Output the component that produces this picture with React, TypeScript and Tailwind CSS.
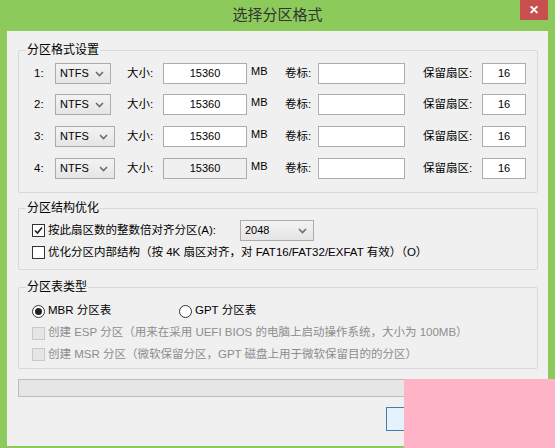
import React from 'react';

const Chevron = () => (
    <svg width="9" height="6" viewBox="0 0 9 6" className="shrink-0">
        <path d="M1 1 L4.5 4.5 L8 1" fill="none" stroke="#6d6d6d" strokeWidth="1.6" />
    </svg>
);

function Select({ value, w }: { value: string; w: string }) {
    return (
        <div className={`${w} h-[21px] flex items-center justify-between pl-[4px] pr-[6px] border border-[#acacac] bg-gradient-to-b from-[#f3f3f3] to-[#e5e5e5] text-[11px] text-black`}>
            <span>{value}</span>
            <Chevron />
        </div>
    );
}

function Field({ w, value, disabled }: { w: string; value?: string; disabled?: boolean }) {
    return (
        <div className={`${w} h-[21px] flex items-center justify-center border border-[#abadb3] text-[11px] text-black ${disabled ? 'bg-[#f0f0f0]' : 'bg-white'}`}>
            {value}
        </div>
    );
}

function Check({ checked, disabled }: { checked?: boolean; disabled?: boolean }) {
    return (
        <div className={`w-[13px] h-[13px] shrink-0 flex items-center justify-center border ${disabled ? 'border-[#c9c9c9] bg-[#e6e6e6]' : 'border-[#333] bg-white'}`}>
            {checked && (
                <svg width="9" height="9" viewBox="0 0 9 9">
                    <path d="M1 4.5 L3.5 7 L8 1.5" fill="none" stroke="#222" strokeWidth="1.7" />
                </svg>
            )}
        </div>
    );
}

function Radio({ checked }: { checked?: boolean }) {
    return (
        <div className="w-[13px] h-[13px] shrink-0 rounded-full border border-[#333] bg-white flex items-center justify-center">
            {checked && <div className="w-[7px] h-[7px] rounded-full bg-[#222]" />}
        </div>
    );
}

function Group({ title, className, children }: { title: string; className?: string; children: React.ReactNode }) {
    return (
        <div className={`relative border border-[#d9d9d9] rounded-[2px] ${className ?? ''}`}>
            <span className="absolute left-[7px] -top-[9px] px-[1px] bg-[#f0f0f0] text-[12px] leading-[16px] text-black">{title}</span>
            {children}
        </div>
    );
}

const rows = [
    { n: '1:', sw: 'w-[56px]', mt: '', disabled: false },
    { n: '2:', sw: 'w-[56px]', mt: 'mt-[10px]', disabled: false },
    { n: '3:', sw: 'w-[60px]', mt: 'mt-[11px]', disabled: false },
    { n: '4:', sw: 'w-[60px]', mt: 'mt-[11px]', disabled: true },
];

export default function App() {
    return (
        <div className="relative w-[555px] h-[448px] bg-[#8cca5c] overflow-hidden font-['Liberation_Sans','Noto_Sans_CJK_SC',sans-serif] text-black">
            <div className="h-[31px] flex items-center justify-center text-[15px] text-[#333]">选择分区格式</div>
            <div className="absolute right-[7px] top-0 w-[28px] h-[20px] bg-[#c7504f] flex items-center justify-center text-white text-[12px] font-bold">✕</div>

            <div className="mx-[7px] h-[415px] bg-[#f0f0f0] pl-[11px] pr-[10px] pt-[19px]">
                <Group title="分区格式设置" className="pt-[12px] pb-[13px]">
                    {rows.map(r => (
                        <div key={r.n} className={`flex items-center h-[21px] pl-[15px] text-[11.5px] ${r.mt}`}>
                            <span className="w-[21px]">{r.n}</span>
                            <div className="w-[72px]"><Select value="NTFS" w={r.sw} /></div>
                            <span className="w-[36px]">大小:</span>
                            <Field w="w-[84px]" value="15360" disabled={r.disabled} />
                            <span className="w-[38px] pl-[4px] text-[11px] -mt-[4px]">MB</span>
                            <span className="w-[33px]">卷标:</span>
                            <Field w="w-[87px]" />
                            <span className="w-[77px] pl-[18px]">保留扇区:</span>
                            <Field w="w-[44px]" value="16" />
                        </div>
                    ))}
                </Group>

                <Group title="分区结构优化" className="mt-[15px] pt-[11px] pb-[6px]">
                    <div className="flex items-center h-[21px] pl-[13px] text-[11.5px]">
                        <div className="w-[208px] flex items-center gap-[3px]">
                            <Check checked />
                            <span>按此扇区数的整数倍对齐分区(A):</span>
                        </div>
                        <Select value="2048" w="w-[74px]" />
                    </div>
                    <div className="flex items-center h-[21px] mt-[1px] pl-[13px] gap-[3px] text-[11.5px]">
                        <Check />
                        <span>优化分区内部结构（按 4K 扇区对齐，对 FAT16/FAT32/EXFAT 有效）（O）</span>
                    </div>
                </Group>

                <Group title="分区表类型" className="mt-[17px] pt-[12px] pb-[3px]">
                    <div className="flex items-center h-[22px] pl-[13px] text-[11.5px]">
                        <div className="w-[147px] flex items-center gap-[3px]">
                            <Radio checked />
                            <span>MBR 分区表</span>
                        </div>
                        <div className="flex items-center gap-[3px]">
                            <Radio />
                            <span>GPT 分区表</span>
                        </div>
                    </div>
                    <div className="flex items-center h-[22px] pl-[13px] gap-[3px] text-[11.5px] text-[#8d8d8d]">
                        <Check disabled />
                        <span>创建 ESP 分区（用来在采用 UEFI BIOS 的电脑上启动操作系统，大小为 100MB）</span>
                    </div>
                    <div className="flex items-center h-[21px] pl-[13px] gap-[3px] text-[11.5px] text-[#8d8d8d]">
                        <Check disabled />
                        <span>创建 MSR 分区（微软保留分区，GPT 磁盘上用于微软保留目的的分区）</span>
                    </div>
                </Group>

                <div className="mt-[10px] h-[18px] border border-[#bcbcbc] bg-[#e6e6e6]" />

                <div className="mt-[10px] ml-[368px] w-[75px] h-[24px] border border-[#3c7fb1] bg-[#e5f1fb]" />
            </div>

            <div className="absolute left-[404px] top-[379px] right-0 bottom-0 bg-[#ffb3c7]" />
        </div>
    );
}
